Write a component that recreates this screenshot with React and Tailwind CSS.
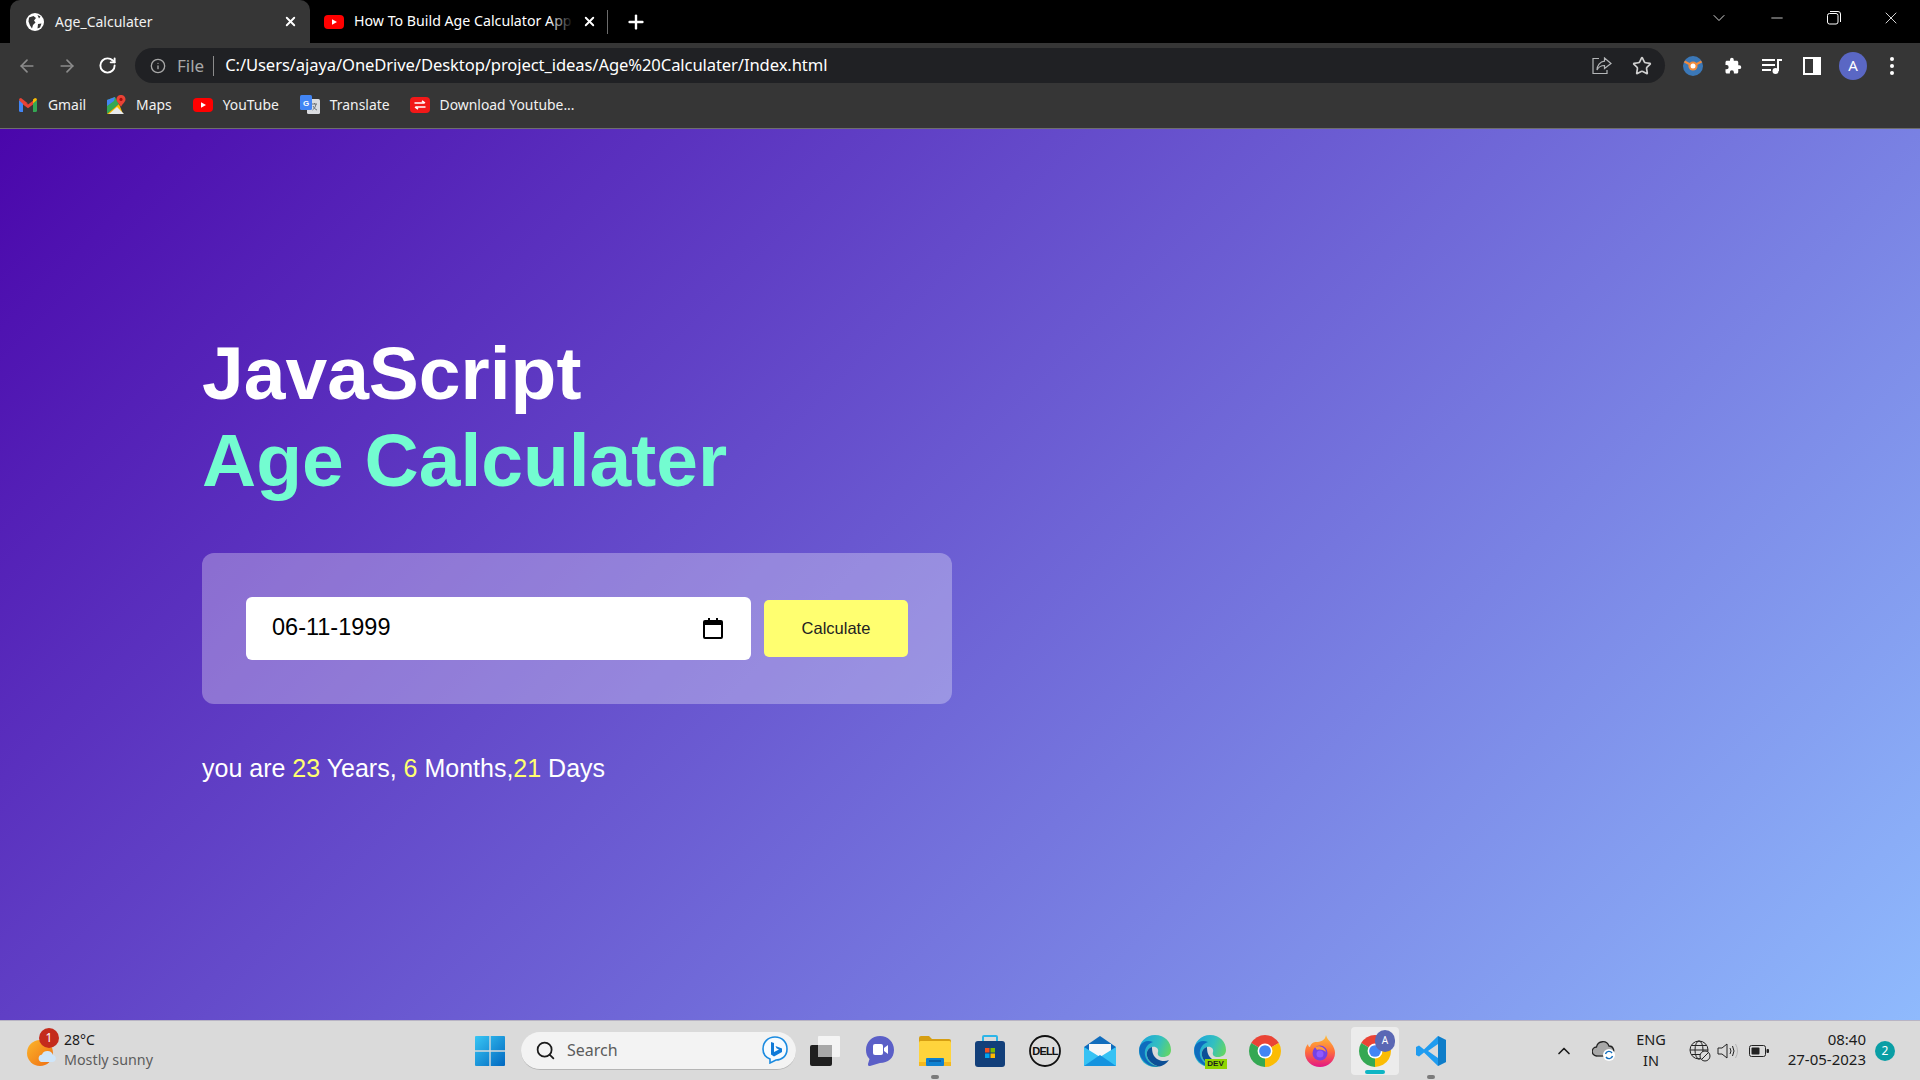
import React from 'react';
import { ArrowLeft, ArrowRight, RotateCw, Info, Star, Plus, X, ChevronDown, ChevronUp, Minus, Search } from 'lucide-react';

// --- Small brand icons ---
const GlobeTab = () => (
  <svg width="18" height="18" viewBox="0 0 18 18">
    <circle cx="9" cy="9" r="9" fill="#fff" />
    <path d="M3 4.5 L7.5 3 L10 5 L8 7.5 L9.5 9.5 L7 12 L6 15.5 L4 12.5 L2.5 8.5Z M12 11 L15.5 10.5 L14 14.5 L11.5 15.5Z M11.5 2 L14.5 3.5 L13 5.5Z" fill="#363636" />
  </svg>
);

const YouTubeIcon = ({ w = 20, h = 14 }) => (
  <svg width={w} height={h} viewBox="0 0 20 14">
    <rect width="20" height="14" rx="4" fill="#f00" />
    <path d="M8 4.2 L13 7 L8 9.8Z" fill="#fff" />
  </svg>
);

const GmailIcon = () => (
  <svg width="18" height="14" viewBox="0 0 18 14">
    <path d="M0 2 L0 12.5 Q0 14 1.5 14 L4 14 L4 5Z" fill="#4285f4" />
    <path d="M14 5 L14 14 L16.5 14 Q18 14 18 12.5 L18 2Z" fill="#34a853" />
    <path d="M0 2 Q0 0 2 0 L9 5.5 L4 6 Z" fill="#ea4335" />
    <path d="M4 2.8 L9 6.6 L14 2.8 L14 6.5 L9 10.2 L4 6.5Z" fill="#ea4335" />
    <path d="M18 2 Q18 0 16 0 L14 1.6 L14 5.5Z" fill="#fbbc04" />
  </svg>
);

const MapsIcon = () => (
  <svg width="20" height="20" viewBox="0 0 20 20">
    <path d="M1 5 L9 2 L13 9 L1 19Z" fill="#34a853" />
    <path d="M1 19 L13 9 L17 19Z" fill="#fbbc04" />
    <path d="M3 19 L11 12 L18 19Z" fill="#e8eaed" />
    <path d="M1 5 L9 2 L8 6 L1 11Z" fill="#4285f4" />
    <path d="M15 0 C11.8 0 10.5 2.4 10.5 4.4 C10.5 7 14 9 15 12 C16 9 19.5 7 19.5 4.4 C19.5 2.4 18.2 0 15 0Z" fill="#ea4335" />
    <circle cx="15" cy="4.4" r="1.6" fill="#a50e0e" />
  </svg>
);

const TranslateIcon = () => (
  <svg width="20" height="20" viewBox="0 0 20 20">
    <rect x="7" y="4" width="13" height="15" rx="1.5" fill="#dadce0" />
    <path d="M12 9 H17 M14.5 8 V9 M16 9 C15.5 12 14 14 12.5 15 M13 11 C14 13 15.5 14.5 17 15" stroke="#6b7075" fill="none" strokeWidth="1" />
    <rect x="0" y="0" width="12" height="15" rx="1.5" fill="#4285f4" />
    <text x="6" y="10.5" fontSize="8" fontWeight="700" fill="#fff" textAnchor="middle" fontFamily="Liberation Sans">G</text>
  </svg>
);

const DownloadRedIcon = () => (
  <svg width="20" height="16" viewBox="0 0 20 16">
    <rect width="20" height="16" rx="4" fill="#f21818" />
    <path d="M4.5 6 H14.5 M12 3.8 L15 6 M15.5 10 H5.5 M8 12.2 L5 10" stroke="#fff" strokeWidth="1.5" fill="none" />
  </svg>
);

const ShareIcon = () => (
  <svg width="20" height="18" viewBox="0 0 20 18" fill="none" stroke="#b4b6b8" strokeWidth="1.2">
    <path d="M7 1.5 H1 V16.5 H15 V13" />
    <path d="M12.5 1 L19 6.5 L12.5 11.5 V8.5 C9 8.5 6.5 10 5 13 C5 8.5 8 4.5 12.5 4.2Z" />
  </svg>
);

const ExtensionIcon = () => (
  <svg width="20" height="20" viewBox="0 0 20 20">
    <circle cx="10" cy="10" r="10" fill="#3b78b8" />
    <path d="M1.5 5.5 L10 10 L18.5 5.5" stroke="#f28b3c" strokeWidth="2.2" fill="none" />
    <circle cx="10" cy="10" r="4.6" fill="#f28b3c" />
    <circle cx="10" cy="10" r="2.5" fill="#fff" />
  </svg>
);

const PuzzleIcon = () => (
  <svg width="18" height="18" viewBox="0 0 24 24" fill="#fff">
    <path d="M20.5 11H19V7c0-1.1-.9-2-2-2h-4V3.5a2.5 2.5 0 0 0-5 0V5H4c-1.1 0-2 .9-2 2v3.8h1.5a2.7 2.7 0 0 1 0 5.4H2V20c0 1.1.9 2 2 2h3.8v-1.5a2.7 2.7 0 0 1 5.4 0V22H17c1.1 0 2-.9 2-2v-4h1.5a2.5 2.5 0 0 0 0-5z" />
  </svg>
);

const MediaIcon = () => (
  <svg width="20" height="16" viewBox="0 0 20 16" fill="#fff">
    <rect x="0" y="1" width="13" height="2" />
    <rect x="0" y="6" width="13" height="2" />
    <rect x="0" y="11" width="9" height="2" />
    <circle cx="13.5" cy="13" r="3" />
    <path d="M15 1 H20 V3 H17 V13 H15Z" />
  </svg>
);

const SidePanelIcon = () => (
  <svg width="18" height="18" viewBox="0 0 18 18">
    <rect width="18" height="18" fill="#fff" />
    <rect x="2" y="2" width="8" height="14" fill="#363636" />
  </svg>
);

const RestoreIcon = () => (
  <svg width="14" height="14" viewBox="0 0 14 14" fill="none" stroke="#fff" strokeWidth="1">
    <rect x="0.5" y="2.5" width="10.5" height="10.5" rx="2" />
    <path d="M3 .5 H11 Q13.5 .5 13.5 3 V11" />
  </svg>
);

// --- Taskbar icons ---
const WeatherIcon = () => (
  <div className="relative w-[34px] h-[36px]">
    <svg width="34" height="36" viewBox="0 0 34 36">
      <defs>
        <linearGradient id="sun" x1="0" y1="0" x2="1" y2="1">
          <stop offset="0" stopColor="#fbb62b" />
          <stop offset="1" stopColor="#ef6c11" />
        </linearGradient>
      </defs>
      <circle cx="14" cy="20" r="13" fill="url(#sun)" />
      <path d="M15 29 a4 4 0 0 1 1-7.6 a6 6 0 0 1 11 .6 a3.6 3.6 0 0 1 0 7 Z" fill="#cfe6fa" />
    </svg>
    <div className="absolute left-[13px] top-[-5px] w-[20px] h-[20px] rounded-full bg-[#c42b1c] text-white text-[12px] flex items-center justify-center font-['Noto_Sans',sans-serif]">1</div>
  </div>
);

const WindowsIcon = () => (
  <svg width="30" height="30" viewBox="0 0 30 30">
    <defs>
      <linearGradient id="win" x1="0" y1="0" x2="1" y2="1">
        <stop offset="0" stopColor="#38c6f4" />
        <stop offset="1" stopColor="#0067c0" />
      </linearGradient>
    </defs>
    <path d="M0 1 Q0 0 1 0 H14.3 V14.3 H0Z M15.7 0 H29 Q30 0 30 1 V14.3 H15.7Z M0 15.7 H14.3 V30 H1 Q0 30 0 29Z M15.7 15.7 H30 V29 Q30 30 29 30 H15.7Z" fill="url(#win)" />
  </svg>
);

const BingIcon = () => (
  <svg width="26" height="28" viewBox="0 0 26 28">
    <path d="M13 1 C20 1 25 6 25 13 C25 20 20 24 14 24 L8 27 L8 23 C3 21 1 17 1 13 C1 6 6 1 13 1Z" fill="#f6fbff" stroke="#1b8be0" strokeWidth="1.6" />
    <path d="M9 6 L12 7 V16 L17 13.5 L14.5 12.3 L13.5 10 L20 12.5 V16 L12 20.5 L9 18.5Z" fill="#0f7ad8" />
  </svg>
);

const TaskViewIcon = () => (
  <svg width="30" height="30" viewBox="0 0 30 30">
    <rect x="0" y="9" width="22" height="21" rx="2" fill="#1f1f1f" />
    <rect x="8" y="0" width="22" height="21" rx="1" fill="#f4f4f4" />
    <rect x="8" y="9" width="14" height="12" fill="#a8a8a8" />
  </svg>
);

const MeetIcon = () => (
  <svg width="30" height="32" viewBox="0 0 30 32">
    <path d="M15 1 C23 1 29 7 29 15 C29 23 23 28 15 28 L5 31 Q2.5 31.5 3 29 L4.5 24 C2 21.5 1 18.5 1 15 C1 7 7 1 15 1Z" fill="#5b5fc7" />
    <rect x="8" y="9" width="10" height="11" rx="2" fill="#fff" />
    <path d="M19 13 L23 10 V19 L19 16Z" fill="#fff" />
  </svg>
);

const ExplorerIcon = () => (
  <svg width="32" height="30" viewBox="0 0 32 30">
    <path d="M0 2 Q0 0 2 0 H10 L13 3 H30 Q32 3 32 5 V10 H0Z" fill="#d69e12" />
    <rect x="0" y="5" width="32" height="25" rx="1.5" fill="#ffd43c" />
    <rect x="0" y="26" width="32" height="4" fill="#f4b81f" />
    <rect x="7" y="22" width="18" height="8" rx="1" fill="#0e80d0" />
    <rect x="10" y="24" width="12" height="2" fill="#0a5ea5" />
  </svg>
);

const StoreIcon = () => (
  <svg width="30" height="32" viewBox="0 0 30 32">
    <path d="M8 6 V2 Q8 1 9 1 H21 Q22 1 22 2 V6" fill="none" stroke="#2cb5e8" strokeWidth="2" />
    <rect x="0" y="6" width="30" height="26" rx="3" fill="#123f7a" />
    <rect x="10" y="13" width="4.5" height="4.5" fill="#f25022" />
    <rect x="15.5" y="13" width="4.5" height="4.5" fill="#7fba00" />
    <rect x="10" y="18.5" width="4.5" height="4.5" fill="#00a4ef" />
    <rect x="15.5" y="18.5" width="4.5" height="4.5" fill="#ffb900" />
  </svg>
);

const DellIcon = () => (
  <svg width="32" height="32" viewBox="0 0 32 32">
    <circle cx="16" cy="16" r="15" fill="#dcdcdc" stroke="#111" strokeWidth="1.8" />
    <text x="16" y="20" fontSize="11" fontWeight="700" fill="#111" textAnchor="middle" fontFamily="Liberation Sans" letterSpacing="-0.8">DELL</text>
  </svg>
);

const MailIcon = () => (
  <svg width="32" height="30" viewBox="0 0 32 30">
    <path d="M0 11 L16 0 L32 11 V30 H0Z" fill="#0f6cbd" />
    <path d="M5 8 H27 V17 L16 23 L5 17Z" fill="#f4f6f8" />
    <path d="M0 11 L16 21 L32 11 V30 H0Z" fill="#36c2f4" />
    <path d="M0 30 L16 19 L32 30Z" fill="#1493df" />
  </svg>
);

const EdgeIcon = ({ dev }) => (
  <div className="relative w-[32px] h-[32px]">
    <svg width="32" height="32" viewBox="0 0 32 32">
      <defs>
        <linearGradient id={dev ? 'edgeA2' : 'edgeA'} x1="0" y1="0.2" x2="1" y2="0.6">
          <stop offset="0" stopColor="#1aa4dd" />
          <stop offset="0.55" stopColor="#33bfc0" />
          <stop offset="1" stopColor="#6ad85a" />
        </linearGradient>
      </defs>
      <path d="M16 0 C26 0 32 7 32 15 C32 20 28 22 24 22 C20 22 18 20 19 17 C20 14 17 11 13 12 C9 13 7 17 8 21 C9 26 14 30 20 31.5 C18 32 17 32 16 32 C7 32 0 25 0 16 C0 7 7 0 16 0Z" fill={`url(#${dev ? 'edgeA2' : 'edgeA'})`} />
      <path d="M1 11 C4 6 9 5 14 7 C8 9 5 14 6 20 C7 26 13 31 20 31.5 C12 33 4 28 1 20 C0 17 0 14 1 11Z" fill="#0f6cbd" />
      <path d="M13 12 C9 13 7 17 8 21 C9 26 14 30 20 31.5 C24 31 28 28 30 25 C26 27 21 26 18 24 C14 21 13 17 13 12Z" fill="#0c4f96" />
    </svg>
    {dev && <div className="absolute right-[-1px] bottom-[-2px] w-[22px] h-[10px] bg-[#8fd400] text-[8px] leading-[10px] font-bold text-center text-[#1c1c1c] font-['Liberation_Sans',sans-serif]">DEV</div>}
  </div>
);

const ChromeIcon = ({ size = 32 }) => (
  <svg width={size} height={size} viewBox="0 0 24 24">
    <path d="M12 12 L22.39 6 A12 12 0 0 0 1.61 6Z" fill="#ea4335" />
    <path d="M12 12 L22.39 6 A12 12 0 0 1 12 24Z" fill="#fbbc04" />
    <path d="M12 12 L12 24 A12 12 0 0 1 1.61 6Z" fill="#34a853" />
    <circle cx="12" cy="12" r="5.6" fill="#fff" />
    <circle cx="12" cy="12" r="4.4" fill="#4285f4" />
  </svg>
);

const FirefoxIcon = () => (
  <svg width="30" height="32" viewBox="0 0 30 32">
    <defs>
      <linearGradient id="ff" x1="0" y1="0" x2="0" y2="1">
        <stop offset="0" stopColor="#ffc13b" />
        <stop offset="0.5" stopColor="#ff7139" />
        <stop offset="1" stopColor="#e31587" />
      </linearGradient>
    </defs>
    <path d="M21 0 C22 4 24 5 26 8 C29 12 30 15 30 18 C30 26 23 32 15 32 C7 32 0 26 0 18 C0 14 1 11 3 9 C3 11 4 12 5 12 C6 8 9 7 11 7 C15 7 20 6 21 0Z" fill="url(#ff)" />
    <circle cx="15" cy="18" r="7.5" fill="#7542e5" />
    <path d="M10 12 C14 10 20 12 21 17 C19 15 15 14 12 15Z" fill="#ff9640" />
    <circle cx="15" cy="19" r="3.5" fill="#9059ff" />
  </svg>
);

const VSCodeIcon = () => (
  <svg width="30" height="32" viewBox="0 0 30 30">
    <path d="M22 0 L30 4 V26 L22 30 L8 16.5 L3 20.5 L0 19 V11 L3 9.5 L8 13.5Z M22 8 L12 15 L22 22Z" fill="#1f9cf0" fillRule="evenodd" />
    <path d="M22 0 L30 4 V26 L22 30Z" fill="#0065a9" opacity="0.55" />
  </svg>
);

const CloudSyncIcon = () => (
  <svg width="24" height="20" viewBox="0 0 24 20">
    <path d="M5 15 A4.5 4.5 0 0 1 4.5 6 A6.5 6.5 0 0 1 17 5 A4.5 4.5 0 0 1 20 13" fill="#a8a8a8" stroke="#222" strokeWidth="1.3" />
    <path d="M5 15 H14" stroke="#222" strokeWidth="1.3" />
    <circle cx="17" cy="14" r="6" fill="#fff" />
    <path d="M13.5 13 A3.6 3.6 0 0 1 20 12 M20.5 15 A3.6 3.6 0 0 1 14 16" fill="none" stroke="#0f6cbd" strokeWidth="1.4" />
  </svg>
);

const GlobeOffIcon = () => (
  <svg width="22" height="22" viewBox="0 0 22 22" fill="none" stroke="#222" strokeWidth="1">
    <circle cx="10" cy="10" r="9" />
    <ellipse cx="10" cy="10" rx="4" ry="9" />
    <path d="M1 10 H19 M2.5 5.5 H17.5 M2.5 14.5 H12" />
    <circle cx="16" cy="16" r="5" fill="#dcdcdc" />
    <path d="M12.6 19.4 L19.4 12.6" />
  </svg>
);

const VolumeIcon = () => (
  <svg width="22" height="18" viewBox="0 0 22 18" fill="none" stroke="#222" strokeWidth="1">
    <path d="M1 6 H5 L10 2 V16 L5 12 H1Z" />
    <path d="M13 6 Q15 9 13 12 M15.5 4 Q18.5 9 15.5 14" />
    <path d="M18.5 2 Q22.5 9 18.5 16" stroke="#b5b5b5" />
  </svg>
);

const BatteryIcon = () => (
  <svg width="20" height="12" viewBox="0 0 20 12">
    <rect x="0.5" y="0.5" width="16" height="11" rx="2" fill="none" stroke="#222" />
    <rect x="2.5" y="2.5" width="8" height="7" rx="1" fill="#222" />
    <rect x="17.5" y="4" width="2.5" height="4" rx="1" fill="#222" />
  </svg>
);

// --- Browser chrome ---
const bookmarks = [
  { name: 'Gmail', icon: <GmailIcon />, gap: 'mr-[20px]' },
  { name: 'Maps', icon: <MapsIcon />, gap: 'mr-[21px]' },
  { name: 'YouTube', icon: <YouTubeIcon />, gap: 'mr-[21px]' },
  { name: 'Translate', icon: <TranslateIcon />, gap: 'mr-[20px]' },
  { name: 'Download Youtube...', icon: <DownloadRedIcon />, gap: '' },
];

const BrowserChrome = () => (
  <header className="shrink-0 font-['Noto_Sans',sans-serif] text-white">
    {/* tab strip */}
    <div className="h-[43px] bg-black flex items-end pl-[10px]">
      <div className="w-[300px] h-[43px] bg-[#363636] rounded-t-[10px] flex items-center pl-[16px] pr-[12px]">
        <GlobeTab />
        <span className="ml-[11px] -mt-[1px] text-[14px] text-[#f1f1f1]">Age_Calculater</span>
        <X size={15} strokeWidth={3} className="ml-auto" />
      </div>
      <div className="w-[297px] h-[43px] flex items-center pl-[14px] pr-[10px]">
        <YouTubeIcon />
        <div className="relative ml-[10px] -mt-[1px] w-[219px] overflow-hidden whitespace-nowrap text-[14.2px]">
          How To Build Age Calculator App
          <div className="absolute right-0 top-0 bottom-0 w-[24px] bg-gradient-to-r from-transparent to-black" />
        </div>
        <X size={15} strokeWidth={3} className="ml-auto" />
      </div>
      <div className="w-px h-[24px] bg-[#6b6b6b] mb-[9px]" />
      <div className="ml-[17px] h-[43px] flex items-center">
        <Plus size={22} strokeWidth={2.6} />
      </div>
      <div className="ml-auto h-[36px] flex items-center self-start">
        <ChevronDown size={20} strokeWidth={1} className="mr-[39px]" />
        <Minus size={18} strokeWidth={1} className="mr-[41px]" />
        <RestoreIcon />
        <X size={20} strokeWidth={1} className="ml-[40px] mr-[19px]" />
      </div>
    </div>
    {/* address bar */}
    <div className="h-[45px] bg-[#363636] flex items-center">
      <ArrowLeft size={20} className="ml-[17px] text-[#8c8c8c]" />
      <ArrowRight size={20} className="ml-[20px] text-[#8c8c8c]" />
      <RotateCw size={19} strokeWidth={2.4} className="ml-[21px] text-white" />
      <div className="ml-[18px] w-[1530px] h-[35px] rounded-full bg-[#202124] flex items-center pl-[15px] pr-[13px]">
        <Info size={16} className="text-[#a8a8a8]" />
        <span className="ml-[11px] text-[17px] text-[#a8a8a8]">File</span>
        <div className="w-px h-[20px] bg-[#8c8c8c] ml-[9px]" />
        <span className="ml-[11px] text-[16.6px] text-white tracking-[-0.1px]">C:/Users/ajaya/OneDrive/Desktop/project_ideas/Age%20Calculater/Index.html</span>
        <div className="ml-auto flex items-center gap-[20px]">
          <ShareIcon />
          <Star size={20} className="text-[#d0d0d0]" />
        </div>
      </div>
      <div className="ml-[18px]"><ExtensionIcon /></div>
      <div className="ml-[21px]"><PuzzleIcon /></div>
      <div className="ml-[20px]"><MediaIcon /></div>
      <div className="ml-[21px]"><SidePanelIcon /></div>
      <div className="ml-[18px] w-[28px] h-[28px] rounded-full bg-[#5a67c4] flex items-center justify-center text-[15px]">A</div>
      <div className="ml-[23px] flex flex-col gap-[3px]">
        <div className="w-[4px] h-[4px] rounded-full bg-white" />
        <div className="w-[4px] h-[4px] rounded-full bg-white" />
        <div className="w-[4px] h-[4px] rounded-full bg-white" />
      </div>
    </div>
    {/* bookmarks */}
    <div className="h-[41px] bg-[#363636] border-b border-[#6e6e6e] flex items-center pl-[18px] pb-[6px]">
      {bookmarks.map((b) => (
        <div key={b.name} className={`flex items-center gap-[10px] ${b.gap}`}>
          <span className="flex items-center justify-center w-[20px]">{b.icon}</span>
          <span className="text-[13.9px] text-[#f1f1f1]">{b.name}</span>
        </div>
      ))}
    </div>
  </header>
);

// --- Taskbar ---
const taskbarIcons = [
  { id: 'view', icon: <TaskViewIcon /> },
  { id: 'meet', icon: <MeetIcon /> },
  { id: 'explorer', icon: <ExplorerIcon />, running: true },
  { id: 'store', icon: <StoreIcon /> },
  { id: 'dell', icon: <DellIcon /> },
  { id: 'mail', icon: <MailIcon /> },
  { id: 'edge', icon: <EdgeIcon /> },
  { id: 'edgedev', icon: <EdgeIcon dev /> },
  { id: 'chrome', icon: <ChromeIcon /> },
  { id: 'firefox', icon: <FirefoxIcon /> },
];

const Taskbar = () => (
  <footer className="shrink-0 h-[60px] bg-[#dadada] border-t border-[#b8b4c4] flex items-center font-['Noto_Sans',sans-serif] text-[#1b1b1b]">
    <div className="w-[462px] pl-[26px] flex items-center">
      <WeatherIcon />
      <div className="ml-[4px] text-[14px] leading-[20px] -mt-[2px]">
        <div>28°C</div>
        <div className="text-[#5c5c5c] text-[14.3px]">Mostly sunny</div>
      </div>
    </div>
    <div className="w-[55px] flex justify-center"><WindowsIcon /></div>
    <div className="ml-[4px] w-[275px] h-[38px] rounded-full bg-[#f3f3f3] border-b border-[#b5b5b5] flex items-center pl-[14px] pr-[6px]">
      <Search size={21} strokeWidth={2} className="text-[#1b1b1b]" />
      <span className="ml-[11px] text-[16px] text-[#5c5c5c]">Search</span>
      <div className="ml-auto mr-[2px]"><BingIcon /></div>
    </div>
    <div className="ml-[1px] flex items-center">
      {taskbarIcons.map((t) => (
        <div key={t.id} className="relative w-[55px] h-[48px] flex items-center justify-center">
          {t.icon}
          {t.running && <div className="absolute bottom-[-4px] w-[8px] h-[4px] rounded-full bg-[#7b7b7b]" />}
        </div>
      ))}
      <div className="relative w-[48px] h-[48px] mx-[4px] rounded-[4px] bg-[#ececec] flex items-center justify-center">
        <ChromeIcon />
        <div className="absolute right-[4px] top-[3px] w-[20px] h-[22px] rounded-full bg-[#5a67b4] text-white text-[10px] flex items-center justify-center">A</div>
        <div className="absolute bottom-[1px] w-[20px] h-[4px] rounded-full bg-[#0db5c4]" />
      </div>
      <div className="relative w-[55px] h-[48px] flex items-center justify-center">
        <VSCodeIcon />
        <div className="absolute bottom-[-4px] w-[8px] h-[4px] rounded-full bg-[#7b7b7b]" />
      </div>
    </div>
    <div className="ml-auto flex items-center pr-[25px]">
      <ChevronUp size={20} strokeWidth={2} />
      <div className="ml-[18px]"><CloudSyncIcon /></div>
      <div className="ml-[12px] w-[46px] -mt-[2px] text-center text-[14.5px] leading-[21px]">
        <div>ENG</div>
        <div>IN</div>
      </div>
      <div className="ml-[15px]"><GlobeOffIcon /></div>
      <div className="ml-[6px]"><VolumeIcon /></div>
      <div className="ml-[10px]"><BatteryIcon /></div>
      <div className="ml-[7px] w-[90px] text-right text-[15px] leading-[20px] -mt-[3px]">
        <div>08:40</div>
        <div>27-05-2023</div>
      </div>
      <div className="ml-[9px] w-[20px] h-[20px] rounded-full bg-[#0a9ea5] text-white text-[12px] flex items-center justify-center">2</div>
    </div>
  </footer>
);

// --- Main App ---
const App = () => (
  <div className="w-[1920px] h-[1080px] overflow-hidden flex flex-col">
    <BrowserChrome />
    <main className="flex-1 bg-[linear-gradient(135deg,#4a06ab,#8fbafd)] pl-[202px] pt-[201px] font-['Liberation_Sans',sans-serif]">
      <h1 className="text-[75px] leading-[87px] font-bold text-white">
        JavaScript
        <br />
        <span className="text-[#73fcd0]">Age Calculater</span>
      </h1>
      <div className="mt-[49px] w-[750px] h-[151px] rounded-[12px] bg-white/30 flex items-center pl-[44px]">
        <div className="w-[505px] h-[63px] rounded-[6px] bg-white flex items-center pl-[26px] pr-[28px]">
          <span className="text-[23.5px] text-black -mt-[2px]">06-11-1999</span>
          <svg className="ml-auto" width="20" height="21" viewBox="0 0 20 21">
            <path d="M5 0 H7 V2 H13 V0 H15 V2 H18 Q20 2 20 4 V19 Q20 21 18 21 H2 Q0 21 0 19 V4 Q0 2 2 2 H5Z M2 7 V19 H18 V7Z" fill="#000" />
          </svg>
        </div>
        <button className="ml-[13px] w-[144px] h-[57px] rounded-[5px] bg-[#ffff70] text-[#222] text-[16.5px]">Calculate</button>
      </div>
      <p className="mt-[46px] text-[25px] text-white">
        you are <span className="text-[#ffff70]">23</span> Years, <span className="text-[#ffff70]">6</span> Months,<span className="text-[#ffff70]">21</span> Days
      </p>
    </main>
    <Taskbar />
  </div>
);

export default App;
